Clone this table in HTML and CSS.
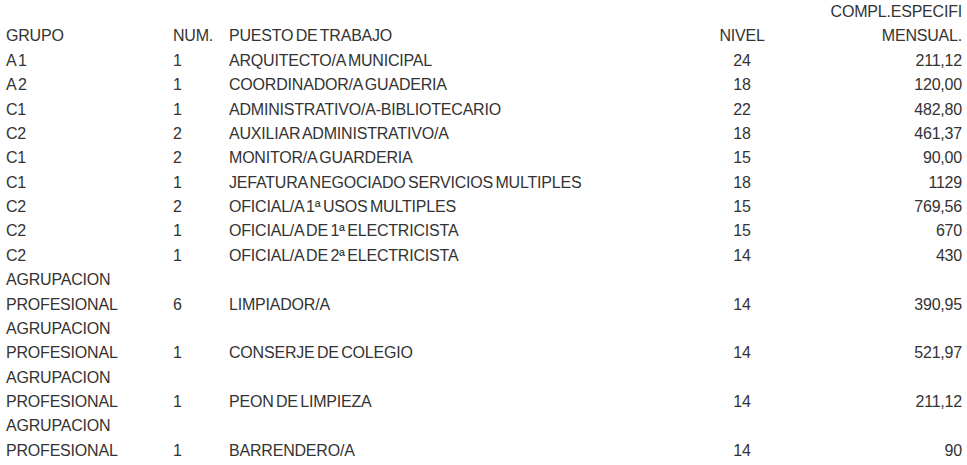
FILE: index.html
```html
<!DOCTYPE html>
<html lang="es">
<head>
<meta charset="utf-8">
<title>Puestos de trabajo</title>
<link rel="stylesheet" href="styles.css">
</head>
<body>
<div class="tabla">
  <div class="fila cabecera">
    <div class="c grupo">GRUPO</div>
    <div class="c num">NUM.</div>
    <div class="c puesto">PUESTO DE TRABAJO</div>
    <div class="c nivel">NIVEL</div>
    <div class="c importe">COMPL.ESPECIFI MENSUAL.</div>
  </div>
  <div class="fila"><div class="c grupo">A 1</div><div class="c num">1</div><div class="c puesto">ARQUITECTO/A MUNICIPAL</div><div class="c nivel">24</div><div class="c importe">211,12</div></div>
  <div class="fila"><div class="c grupo">A 2</div><div class="c num">1</div><div class="c puesto">COORDINADOR/A GUADERIA</div><div class="c nivel">18</div><div class="c importe">120,00</div></div>
  <div class="fila"><div class="c grupo">C1</div><div class="c num">1</div><div class="c puesto">ADMINISTRATIVO/A-BIBLIOTECARIO</div><div class="c nivel">22</div><div class="c importe">482,80</div></div>
  <div class="fila"><div class="c grupo">C2</div><div class="c num">2</div><div class="c puesto">AUXILIAR ADMINISTRATIVO/A</div><div class="c nivel">18</div><div class="c importe">461,37</div></div>
  <div class="fila"><div class="c grupo">C1</div><div class="c num">2</div><div class="c puesto">MONITOR/A GUARDERIA</div><div class="c nivel">15</div><div class="c importe">90,00</div></div>
  <div class="fila"><div class="c grupo">C1</div><div class="c num">1</div><div class="c puesto">JEFATURA NEGOCIADO SERVICIOS MULTIPLES</div><div class="c nivel">18</div><div class="c importe">1129</div></div>
  <div class="fila"><div class="c grupo">C2</div><div class="c num">2</div><div class="c puesto">OFICIAL/A 1ª USOS MULTIPLES</div><div class="c nivel">15</div><div class="c importe">769,56</div></div>
  <div class="fila"><div class="c grupo">C2</div><div class="c num">1</div><div class="c puesto">OFICIAL/A DE 1ª ELECTRICISTA</div><div class="c nivel">15</div><div class="c importe">670</div></div>
  <div class="fila"><div class="c grupo">C2</div><div class="c num">1</div><div class="c puesto">OFICIAL/A DE 2ª ELECTRICISTA</div><div class="c nivel">14</div><div class="c importe">430</div></div>
  <div class="fila"><div class="c grupo">AGRUPACION PROFESIONAL</div><div class="c num">6</div><div class="c puesto">LIMPIADOR/A</div><div class="c nivel">14</div><div class="c importe">390,95</div></div>
  <div class="fila"><div class="c grupo">AGRUPACION PROFESIONAL</div><div class="c num">1</div><div class="c puesto">CONSERJE DE COLEGIO</div><div class="c nivel">14</div><div class="c importe">521,97</div></div>
  <div class="fila"><div class="c grupo">AGRUPACION PROFESIONAL</div><div class="c num">1</div><div class="c puesto">PEON DE LIMPIEZA</div><div class="c nivel">14</div><div class="c importe">211,12</div></div>
  <div class="fila"><div class="c grupo">AGRUPACION PROFESIONAL</div><div class="c num">1</div><div class="c puesto">BARRENDERO/A</div><div class="c nivel">14</div><div class="c importe">90</div></div>
</div>
</body>
</html>
```

FILE: styles.css
```css
html, body {
  margin: 0;
  padding: 0;
  background: #ffffff;
}

body {
  font-family: "Liberation Sans", Arial, sans-serif;
  font-size: 16px;
  line-height: 24.37px;
  color: #333333;
  letter-spacing: -0.2px;
  word-spacing: -1.8px;
}

.tabla {
  padding: 0 5px 0 6px;
}

.fila {
  display: grid;
  grid-template-columns: 167px 56px 461px 104px 1fr;
  align-items: end;
}

.cabecera .importe {
  padding-left: 30px;
}

.grupo {
  padding-right: 40px;
}

.nivel {
  text-align: center;
}

.importe {
  text-align: right;
}
```
